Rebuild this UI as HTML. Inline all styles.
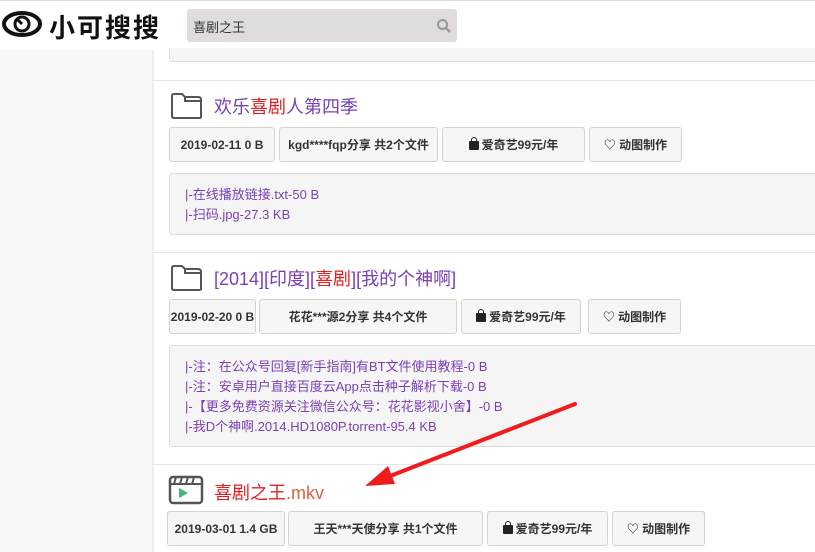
<!DOCTYPE html>
<html><head><meta charset="utf-8"><style>
*{margin:0;padding:0;box-sizing:border-box}
body{width:815px;height:552px;overflow:hidden;background:#fff;font-family:"Liberation Sans","Noto Sans CJK SC",sans-serif;position:relative}
.a{position:absolute}
.side{left:0;top:50px;width:153px;height:502px;background:#f8f8f8;border-right:1px solid #eee}
.sep{left:153px;width:662px;height:1px;background:#e6e6e6}
.btn{position:absolute;height:35px;border:1px solid #d6d2d2;border-radius:3px;background:#f8f6f5;font-size:12px;font-weight:bold;color:#333;display:flex;align-items:center;justify-content:center;white-space:nowrap}
.box{position:absolute;left:169px;width:650px;background:#f5f5f5;border:1px solid #ddd;border-radius:3px;font-size:13px;color:#7b3fb5;padding:11px 0 0 15px;line-height:20px}
.t{position:absolute;left:214px;font-size:18px;color:#7b3fb5;white-space:nowrap}
.r{color:#e02020}
.lk{display:inline-block;width:10px;height:9px;background:#222;border-radius:1px;margin-right:3px;position:relative;top:1px}
.lk:before{content:"";position:absolute;left:2px;top:-4px;width:4px;height:4px;border:1px solid #222;border-bottom:none;border-radius:3px 3px 0 0}
</style></head><body>
<div class="a" style="left:0;top:0;width:815px;height:1px;background:#ddd"></div>
<div class="a side"></div>
<svg class="a" style="left:2px;top:9px" width="42" height="30" viewBox="0 0 42 30"><ellipse cx="20" cy="15" rx="18" ry="11" fill="none" stroke="#111" stroke-width="4"/><circle cx="20" cy="15" r="7" fill="none" stroke="#111" stroke-width="3"/><path d="M20 15 L15 10" stroke="#111" stroke-width="3"/></svg>
<div class="a" style="left:49px;top:8px;font-size:26px;font-weight:bold;color:#111;letter-spacing:2px;font-family:'Noto Sans CJK SC',sans-serif">小可搜搜</div>
<div class="a" style="left:187px;top:9px;width:270px;height:33px;background:#e0dcdc;border-radius:3px;font-size:13px;color:#333;padding:8px 0 0 6px">喜剧之王</div>
<svg class="a" style="left:436px;top:18px" width="16" height="16" viewBox="0 0 16 16"><circle cx="6.5" cy="6.5" r="4.5" fill="none" stroke="#999" stroke-width="2"/><path d="M10 10 L14 14" stroke="#999" stroke-width="2.4"/></svg>
<div class="a" style="left:169px;top:48px;width:650px;height:14px;background:#f5f5f5;border:1px solid #ddd;border-top:none;border-radius:0 0 3px 3px"></div>
<div class="a" style="left:153px;top:50px;width:1px;height:502px;background:#eee"></div>
<div class="a sep" style="top:80px"></div>
<div class="a sep" style="top:252px"></div>
<div class="a sep" style="top:464px"></div>

<svg class="a" style="left:170px;top:92px" width="34" height="28" viewBox="0 0 34 28"><path d="M2 4 Q2 2 4 2 H12 L15 5 H28 Q31 5 31 8 V25 Q31 26 29 26 H4 Q2 26 2 24 Z M15 5 V9 H31" fill="none" stroke="#555" stroke-width="2"/></svg>
<div class="t" style="top:93px">欢乐<span class="r">喜剧</span>人第四季</div>
<div class="btn" style="left:169px;top:127px;width:106px">2019-02-11 0 B</div>
<div class="btn" style="left:279px;top:127px;width:159px">kgd****fqp分享 共2个文件</div>
<div class="btn" style="left:442px;top:127px;width:143px"><i class="lk"></i>爱奇艺99元/年</div>
<div class="btn" style="left:589px;top:127px;width:93px">♡ 动图制作</div>
<div class="box" style="top:173px;height:62px">|-在线播放链接.txt-50 B<br>|-扫码.jpg-27.3 KB</div>

<svg class="a" style="left:170px;top:264px" width="34" height="28" viewBox="0 0 34 28"><path d="M2 4 Q2 2 4 2 H12 L15 5 H28 Q31 5 31 8 V25 Q31 26 29 26 H4 Q2 26 2 24 Z M15 5 V9 H31" fill="none" stroke="#555" stroke-width="2"/></svg>
<div class="t" style="top:265px">[2014][印度][<span class="r">喜剧</span>][我的个神啊]</div>
<div class="btn" style="left:169px;top:299px;width:87px">2019-02-20 0 B</div>
<div class="btn" style="left:259px;top:299px;width:198px">花花***源2分享 共4个文件</div>
<div class="btn" style="left:461px;top:299px;width:120px"><i class="lk"></i>爱奇艺99元/年</div>
<div class="btn" style="left:588px;top:299px;width:93px">♡ 动图制作</div>
<div class="box" style="top:345px;height:102px">|-注：在公众号回复[新手指南]有BT文件使用教程-0 B<br>|-注：安卓用户直接百度云App点击种子解析下载-0 B<br>|-【更多免费资源关注微信公众号：花花影视小舍】-0 B<br>|-我D个神啊.2014.HD1080P.torrent-95.4 KB</div>

<svg class="a" style="left:168px;top:475px" width="36" height="30" viewBox="0 0 36 30"><rect x="2" y="2" width="32" height="26" rx="3" fill="none" stroke="#555" stroke-width="2.5"/><path d="M2 9 H34 M8 2 L6 9 M14 2 L12 9 M20 2 L18 9 M26 2 L24 9" stroke="#555" stroke-width="2"/><path d="M11 13 L20 18 L11 23 Z" fill="#3cb878"/></svg>
<div class="t r" style="top:479px">喜剧之王<span style="color:#e0603a">.mkv</span></div>
<div class="btn" style="left:167px;top:511px;width:118px">2019-03-01 1.4 GB</div>
<div class="btn" style="left:288px;top:511px;width:195px">王天***天使分享 共1个文件</div>
<div class="btn" style="left:487px;top:511px;width:121px"><i class="lk"></i>爱奇艺99元/年</div>
<div class="btn" style="left:612px;top:511px;width:93px">♡ 动图制作</div>

<svg class="a" style="left:0;top:0" width="815" height="552"><path d="M575 404 L385 478" stroke="#ee1c1c" stroke-width="4" stroke-linecap="round"/><path d="M365 486 L388 466 L395 484 Z" fill="#ee1c1c"/></svg>
</body></html>
